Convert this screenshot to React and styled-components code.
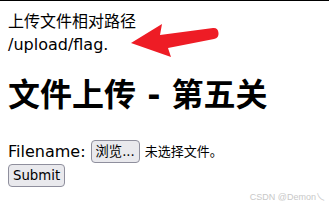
import React from 'react'
import styled, { createGlobalStyle } from 'styled-components'

const GlobalStyle = createGlobalStyle`
    html, body {
        margin:0;
        padding:0;
        background:#fff;
    }
    body {
        font-family:"DejaVu Sans", "Noto Sans CJK SC", sans-serif;
        font-size:16px;
        color:#000;
    }
`
const Page = styled.div`
    position:relative;
    width:329px;
    height:210px;
    box-sizing:border-box;
    border-top:1px solid #000;
    padding:9px 8px 0;
    overflow:hidden;
`
const Note = styled.div`
    line-height:23px;
    position:relative;
`
const Arrow = styled.svg`
    position:absolute;
    left:110px;
    top:4px;
`
const Title = styled.h1`
    font-size:32px;
    font-weight:700;
    margin:20px 0 26px;
    line-height:38px;
`
const Form = styled.div`
    display:flex;
    flex-direction:column;
    gap:1px;
`
const Row = styled.div`
    display:flex;
    align-items:center;
    line-height:20px;
`
const Button = styled.span`
    display:inline-flex;
    align-items:center;
    box-sizing:border-box;
    height:23px;
    padding:0 4px;
    font-size:13.3px;
    background:#e9e9ed;
    border:1px solid #8f8f9d;
    border-radius:4px;
    margin-left:${p => p.$ml || 0}px;
`
const Hint = styled.span`
    font-size:13px;
    margin-left:5px;
`
const Watermark = styled.div`
    position:absolute;
    right:4px;
    bottom:7px;
    font-family:"Liberation Sans", "Noto Sans CJK SC", sans-serif;
    font-size:9px;
    color:#c8c8c8;
`

function App() {
    return (
        <>
            <GlobalStyle />
            <Page>
                <Note>
                    上传文件相对路径<br />/upload/flag.
                    <Arrow width="110" height="50" viewBox="0 0 110 50">
                        <path d="M13 29 L44 10 L42 21 L95 14 Q100 13.5 100.5 19 Q101 24 96 25 L50 34 L53 43 Z" fill="#ee1c25" />
                    </Arrow>
                </Note>
                <Title>文件上传 - 第五关</Title>
                <Form>
                    <Row>
                        Filename:<Button $ml={5}>浏览...</Button><Hint>未选择文件。</Hint>
                    </Row>
                    <Row>
                        <Button>Submit</Button>
                    </Row>
                </Form>
                <Watermark>CSDN @Demon乀</Watermark>
            </Page>
        </>
    )
}

export default App
